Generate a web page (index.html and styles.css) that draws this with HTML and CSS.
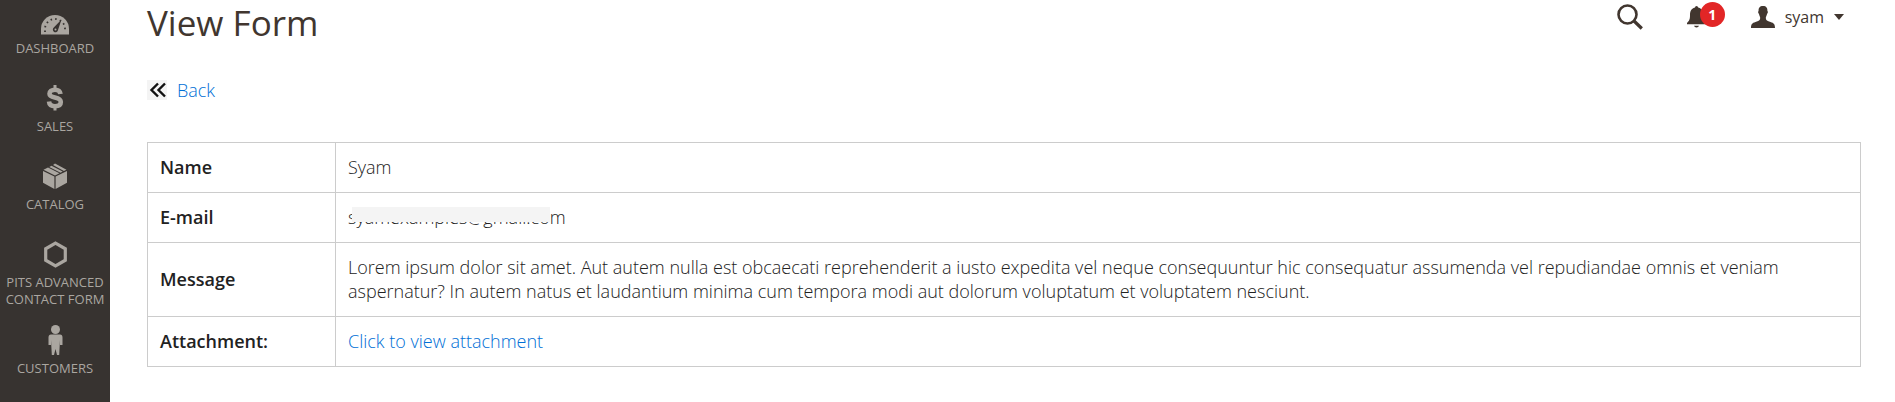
FILE: index.html
```
<!DOCTYPE html>
<html lang="en">
<head>
  <meta charset="UTF-8">
  <meta name="viewport" content="width=device-width, initial-scale=1.0">
  <title>View Form</title>
  <link rel="stylesheet" href="styles.css">
</head>
<body>
  <!-- Sidebar -->
  <nav class="sidebar">
    <a class="menu-item" href="#">
      <svg class="menu-icon" viewBox="0 0 30 30">
        <path fill="currentColor" d="M1 29.500V24a14 14 0 0 1 28 0v5.500z"/>
        <path fill="#373330" d="M21.500 14.500l-3.500 10.500a2.600 2.600 0 1 1-4.200-2.400z"/>
        <circle fill="currentColor" cx="15.500" cy="24.500" r="1"/>
        <path fill="none" stroke="#373330" stroke-width="1.800" stroke-dasharray="1.500 3.200" d="M5 27V24a10 10 0 0 1 20 0V27"/>
      </svg>
      <span>Dashboard</span>
    </a>
    <a class="menu-item" href="#">
      <svg class="menu-icon" viewBox="0 0 30 30">
        <path fill="none" stroke="currentColor" stroke-width="4.600" d="M20.500 11C20 7.800 18 6.800 15 6.800C11.500 6.800 9.500 8.400 9.500 10.800C9.500 16 20.800 13 20.800 19C20.800 21.700 18.500 23.200 15 23.200C11.500 23.200 9.300 21.800 9 18.500"/>
        <path fill="currentColor" d="M13.500 2h3v4h-3zM13.500 23h3v4.500h-3z"/>
      </svg>
      <span>Sales</span>
    </a>
    <a class="menu-item" href="#">
      <svg class="menu-icon" viewBox="0 0 30 30">
        <path fill="currentColor" d="M3 10l11.400 5.500V28L3 21.800zM27 10l-11.400 5.500V28L27 21.800zM3.500 8.800l4.500-2.300 11.500 5.800L15 14.500zM9.200 5.900l2.300-1.200 11.200 5.900-2.200 1.200zM13 4l2-1.500 11.500 6.200-2.600 1.300z"/>
      </svg>
      <span>Catalog</span>
    </a>
    <a class="menu-item" href="#">
      <svg class="menu-icon" viewBox="0 0 30 30">
        <path fill="none" stroke="currentColor" stroke-width="3.200" d="M15.500 4.200l9.800 5.600v11.400l-9.800 5.600-9.800-5.600V9.800z"/>
      </svg>
      <span>Pits Advanced Contact Form</span>
    </a>
    <a class="menu-item" href="#">
      <svg class="menu-icon" viewBox="0 0 30 30">
        <circle fill="currentColor" cx="15.500" cy="4.500" r="4.500"/>
        <path fill="currentColor" d="M11 9.500h9q2.500 0 2.500 3v7.500h-2.500v-5l-.8 15h-2.200l-1.500-6-1.500 6h-2.200l-.8-15v5H8.500v-7.500q0-3 2.500-3z"/>
      </svg>
      <span>Customers</span>
    </a>
  </nav>

  <!-- Main Content -->
  <main class="page">
    <header class="page-header">
      <h1>View Form</h1>
      <div class="header-actions">
        <button class="search" type="button" aria-label="Search">
          <svg width="26" height="26" viewBox="0 0 26 26">
            <circle cx="10.500" cy="10.500" r="9" fill="none" stroke="currentColor" stroke-width="2.600"/>
            <path d="M16.500 16.500l8.300 8" stroke="currentColor" stroke-width="3.200"/>
          </svg>
        </button>
        <button class="notifications" type="button" aria-label="Notifications">
          <svg width="20" height="22" viewBox="0 0 20 22">
            <path fill="currentColor" d="M9.500 0q1.500 0 1.700 1.500C15.500 2.500 16 6 16 9c0 4 1 5.500 3.500 8v1.200H0V17c2.500-2.500 3-4 3-8 0-3 .8-6.500 5-7.500Q8 0 9.500 0zM7 19.700h5q-.5 1.800-2.500 1.800t-2.500-1.800z"/>
          </svg>
          <span class="badge">1</span>
        </button>
        <button class="account" type="button">
          <svg width="24" height="22" viewBox="0 0 24 22">
            <path fill="currentColor" d="M12 0c3.300 0 4.600 2 4.400 5 .8.500.5 2.300-.3 2.800-.4 2-1.300 3-1.300 4.200 0 2.500 1.500 3 4.700 4 3.500 1 4.500 2.500 4.500 6H0c0-3.500 1-5 4.500-6 3.200-1 4.700-1.500 4.700-4 0-1.200-.9-2.200-1.300-4.200-.8-.5-1.100-2.300-.3-2.800C7.400 2 8.700 0 12 0z"/>
          </svg>
          <span>syam</span>
          <svg width="10" height="6" viewBox="0 0 10 6"><path fill="currentColor" d="M0 0h10L5 6z"/></svg>
        </button>
      </div>
    </header>

    <a class="back" href="#">
      <svg width="20" height="20" viewBox="0 0 20 20">
        <path fill="#f4f4f4" d="M0 0h20v20H0z"/>
        <path fill="none" stroke="#111" stroke-width="2.400" d="M11 3.500L4.500 10l6.500 6.500M18 3.500L11.500 10l6.500 6.500"/>
      </svg>
      <span>Back</span>
    </a>

    <table class="form-data">
      <tr>
        <th scope="row">Name</th>
        <td>Syam</td>
      </tr>
      <tr>
        <th scope="row">E-mail</th>
        <td><span class="masked">syamexamples@gmail.com</span></td>
      </tr>
      <tr>
        <th scope="row">Message</th>
        <td>Lorem ipsum dolor sit amet. Aut autem nulla est obcaecati reprehenderit a iusto expedita vel neque consequuntur hic consequatur assumenda vel repudiandae omnis et veniam aspernatur? In autem natus et laudantium minima cum tempora modi aut dolorum voluptatum et voluptatem nesciunt.</td>
      </tr>
      <tr>
        <th scope="row">Attachment:</th>
        <td><a href="#">Click to view attachment</a></td>
      </tr>
    </table>
  </main>
</body>
</html>
```
FILE: styles.css
```
* {
  box-sizing: border-box;
}

body {
  display: flex;
  min-height: 100vh;
  margin: 0;
  background: #fff;
  color: #222;
  font-family: 'Open Sans', sans-serif;
  font-size: 18px;
  font-weight: 300;
  line-height: 24px;
}

a {
  color: #006fd6;
  text-decoration: none;
}

/* Sidebar */
.sidebar {
  flex: 0 0 110px;
  background: #373330;
}

.menu-item {
  display: flex;
  flex-direction: column;
  align-items: center;
  gap: 5px;
  min-height: 78px;
  padding: 5px 4px 12px;
  color: #aaa6a0;
  font-size: 13px;
  font-weight: 400;
  line-height: 17px;
  text-align: center;
  text-transform: uppercase;
}

.menu-icon {
  width: 30px;
  height: 30px;
}

/* Page */
.page {
  flex: 1;
  padding: 0 34px 36px 37px;
}

.page-header {
  display: flex;
  justify-content: space-between;
  align-items: flex-start;
  color: #41362f;
}

h1 {
  margin: 0;
  font-size: 35px;
  font-weight: 400;
  line-height: 46px;
}

.header-actions {
  display: flex;
  align-items: center;
  height: 34px;
  gap: 44px;
  padding-right: 17px;
}

.header-actions button {
  display: flex;
  align-items: center;
  padding: 0;
  border: none;
  background: none;
  color: #41362f;
  font-family: inherit;
  font-size: 16px;
  cursor: pointer;
}

.header-actions .notifications {
  position: relative;
}

.header-actions .account {
  gap: 10px;
}

.badge {
  position: absolute;
  top: -4px;
  left: 13px;
  width: 25px;
  height: 25px;
  border-radius: 50%;
  background: #e22626;
  color: #fff;
  font-size: 14px;
  font-weight: 700;
  line-height: 25px;
  text-align: center;
}

.back {
  display: inline-flex;
  align-items: center;
  gap: 10px;
  margin: 32px 0 40px;
}

/* Form data */
.form-data {
  width: 100%;
  border-collapse: collapse;
}

.form-data th,
.form-data td {
  padding: 12px 12px 13px;
  border: 1px solid #ccc;
  text-align: left;
}

.form-data th {
  width: 188px;
  font-weight: 600;
}

.masked {
  position: relative;
}

.masked::after {
  content: '';
  position: absolute;
  top: 2px;
  left: 4px;
  right: 16px;
  height: 15px;
  background: #f4f4f4;
}
```
